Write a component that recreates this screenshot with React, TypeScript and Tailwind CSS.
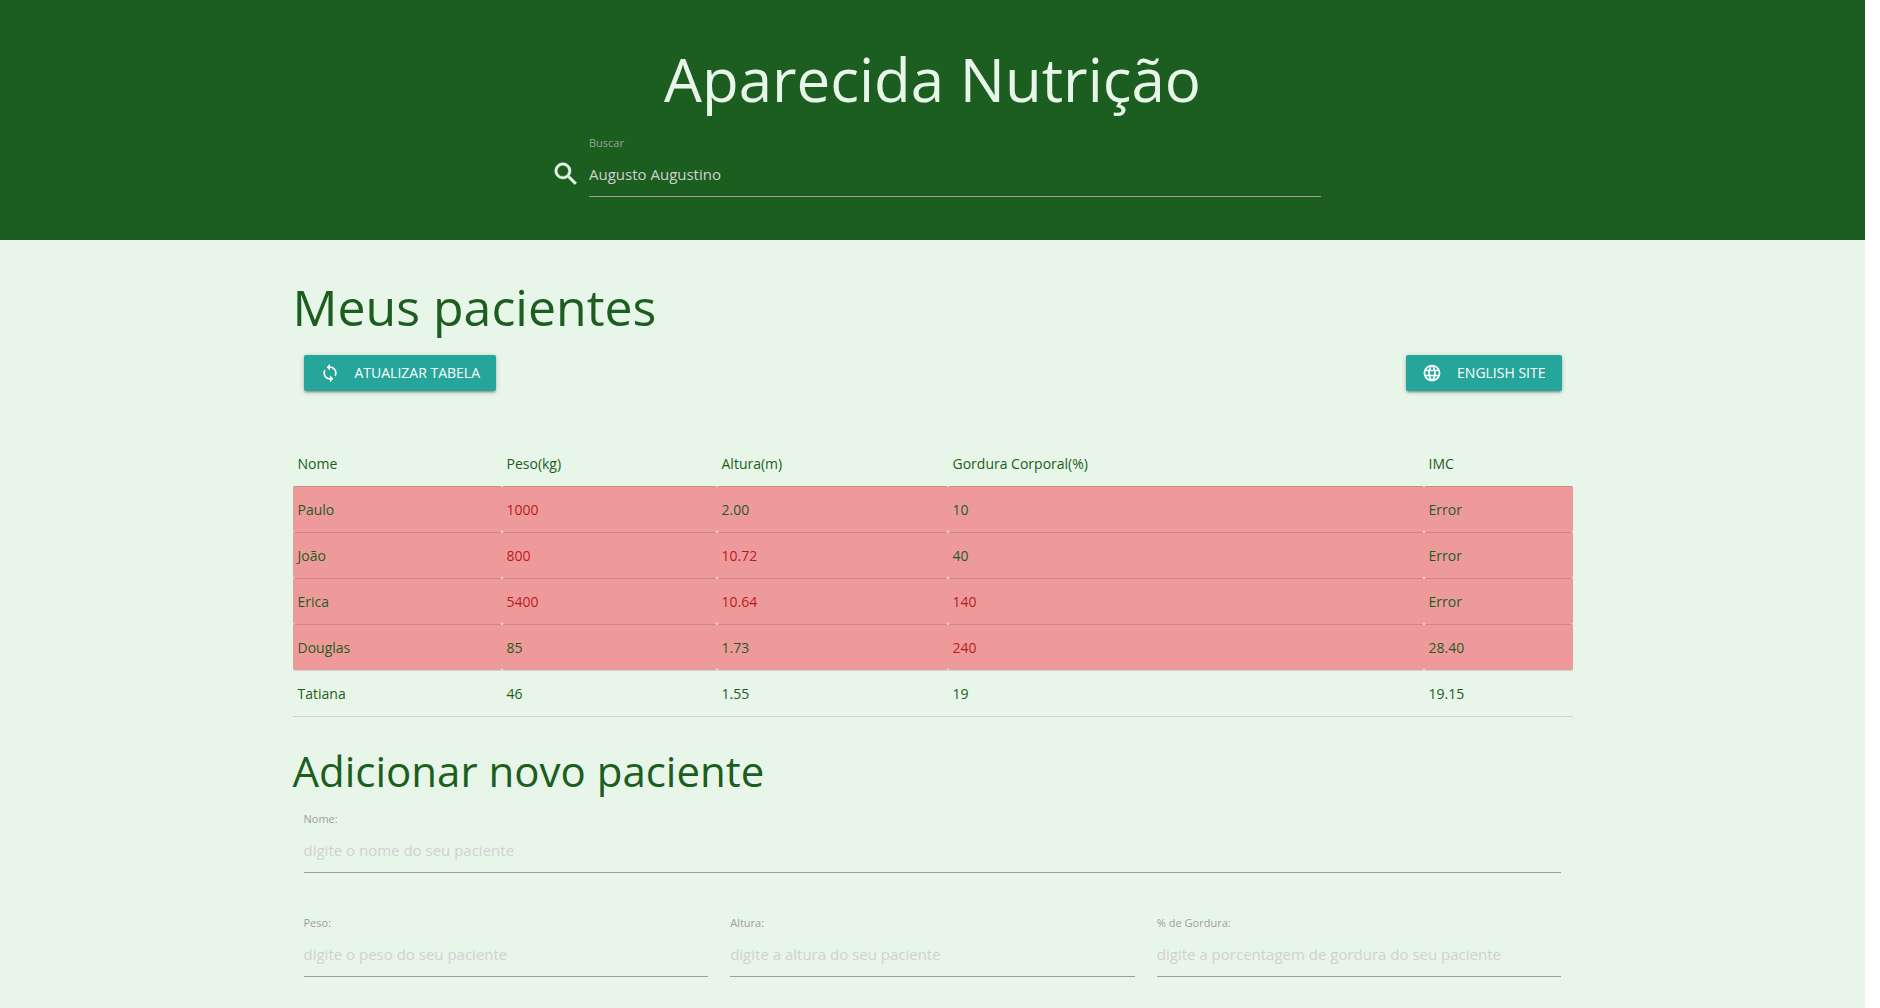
import { useState } from "react";
import { MdLanguage, MdLoop } from "react-icons/md";

type Cell = { value: string; invalid?: boolean };
type Patient = { invalid: boolean; cells: Cell[] };

const columns = ["Nome", "Peso(kg)", "Altura(m)", "Gordura Corporal(%)", "IMC"];

const patients: Patient[] = [
  { invalid: true, cells: [{ value: "Paulo" }, { value: "1000", invalid: true }, { value: "2.00" }, { value: "10" }, { value: "Error" }] },
  { invalid: true, cells: [{ value: "João" }, { value: "800", invalid: true }, { value: "10.72", invalid: true }, { value: "40" }, { value: "Error" }] },
  { invalid: true, cells: [{ value: "Erica" }, { value: "5400", invalid: true }, { value: "10.64", invalid: true }, { value: "140", invalid: true }, { value: "Error" }] },
  { invalid: true, cells: [{ value: "Douglas" }, { value: "85" }, { value: "1.73" }, { value: "240", invalid: true }, { value: "28.40" }] },
  { invalid: false, cells: [{ value: "Tatiana" }, { value: "46" }, { value: "1.55" }, { value: "19" }, { value: "19.15" }] },
];

const buttonClass =
  "flex h-9 items-center gap-[15px] rounded-xs bg-[#26a69a] px-4 text-sm text-white uppercase shadow-[0_2px_2px_0_rgba(0,0,0,0.14),0_3px_1px_-2px_rgba(0,0,0,0.12),0_1px_5px_0_rgba(0,0,0,0.2)]";

function SearchIcon({ className }: { className?: string }) {
  return (
    <svg viewBox="0 0 24 24" fill="currentColor" stroke="currentColor" strokeWidth="0.4" aria-hidden="true" className={className}>
      <path d="M15.5 14h-.79l-.28-.27A6.47 6.47 0 0 0 16 9.5 6.5 6.5 0 1 0 9.5 16c1.61 0 3.09-.59 4.23-1.57l.27.28v.79l5 4.99L20.49 19l-4.99-5zm-6 0C7.01 14 5 11.99 5 9.5S7.01 5 9.5 5 14 7.01 14 9.5 11.99 14 9.5 14z" />
    </svg>
  );
}

function Field({ id, label, placeholder, className = "" }: { id: string; label: string; placeholder: string; className?: string }) {
  const [value, setValue] = useState("");
  return (
    <div className={className}>
      <label htmlFor={id} className="block text-[11px] leading-4 text-[#9e9e9e]">
        {label}
      </label>
      <input
        id={id}
        type="text"
        value={value}
        onChange={(e) => setValue(e.target.value)}
        placeholder={placeholder}
        className="block h-[46px] w-full border-b border-[#9e9e9e] bg-transparent text-[15px] outline-none placeholder:text-[#d1d1d1]"
      />
    </div>
  );
}

export default function App() {
  return (
    <div className="bg-white pr-[15px] font-['Open_Sans','Noto_Sans',sans-serif] text-[#1b5e20]">
      <div className="min-h-screen bg-[#e8f5e9]">
        <header className="flex flex-col items-center bg-[#1b5e20] px-4 pt-[41px] pb-[43px] text-[#e8f5e9]">
          <h1 className="text-[60px] leading-[76px]">Aparecida Nutrição</h1>
          <div className="mt-[18px] flex w-full max-w-[777px] items-end gap-2 pl-[7px]">
            <SearchIcon className="mb-2 size-[30px] shrink-0" />
            <Field id="search" label="Buscar" placeholder="Augusto Augustino" className="grow" />
          </div>
        </header>

        <main className="mx-auto max-w-[1280px]">
          <h2 className="pt-[38px] text-[50px] leading-[58px]">Meus pacientes</h2>
          <div className="mt-[19px] flex justify-between px-[11px]">
            <button type="button" className={buttonClass}>
              <MdLoop className="size-5" />
              Atualizar tabela
            </button>
            <button type="button" className={buttonClass}>
              <MdLanguage className="size-5" />
              English site
            </button>
          </div>

          <table className="mt-[49px] w-full table-fixed border-separate border-spacing-0 border-b border-black/12 text-left text-sm leading-[23px]">
            <colgroup>
              <col className="w-[209px]" />
              <col className="w-[215px]" />
              <col className="w-[231px]" />
              <col className="w-[476px]" />
              <col />
            </colgroup>
            <thead>
              <tr>
                {columns.map((column) => (
                  <th key={column} scope="col" className="px-[5px] pt-3 pb-[11px] font-normal">
                    {column}
                  </th>
                ))}
              </tr>
            </thead>
            <tbody>
              {patients.map((patient) => (
                <tr key={patient.cells[0].value}>
                  {patient.cells.map((cell, i) => (
                    <td
                      key={columns[i]}
                      className={`border-t border-black/12 px-[5px] py-[11px] ${patient.invalid ? "rounded-xs bg-[#ef9a9a]" : ""} ${cell.invalid ? "text-[#b71c1c]" : ""}`}
                    >
                      {cell.value}
                    </td>
                  ))}
                </tr>
              ))}
            </tbody>
          </table>

          <h3 className="mt-[30px] text-[42px] leading-[48px]">Adicionar novo paciente</h3>
          <form className="grid grid-cols-3 gap-x-[22px] gap-y-[42px] px-[11px] pt-4 pb-8">
            <Field id="name" label="Nome:" placeholder="digite o nome do seu paciente" className="col-span-3" />
            <Field id="weight" label="Peso:" placeholder="digite o peso do seu paciente" />
            <Field id="height" label="Altura:" placeholder="digite a altura do seu paciente" />
            <Field id="fat" label="% de Gordura:" placeholder="digite a porcentagem de gordura do seu paciente" />
          </form>
        </main>
      </div>
    </div>
  );
}
